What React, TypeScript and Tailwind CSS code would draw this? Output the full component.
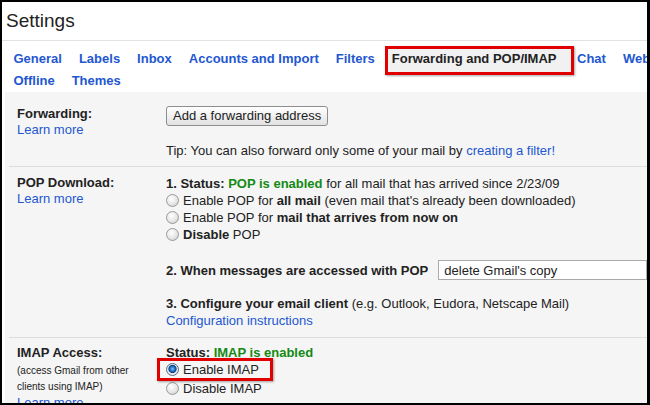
import React from "react";

const tabsTop = ["General", "Labels", "Inbox", "Accounts and Import", "Filters"];

function Radio({ checked = false }: { checked?: boolean }) {
  return (
    <span
      className={`mr-[4px] inline-block h-[13px] w-[13px] shrink-0 rounded-full border ${
        checked
          ? "border-[#5a6b80] bg-[radial-gradient(circle_at_50%_45%,#7fc4ff_0%,#1f6fc0_30%,#0b3f7a_45%,#dfe6ee_55%,#f4f6f8_100%)]"
          : "border-[#9a9a9a] bg-[radial-gradient(circle_at_40%_35%,#ffffff_0%,#e6e6e6_55%,#c4c4c4_100%)]"
      }`}
    />
  );
}

function Label({ title, children }: { title: string; children?: React.ReactNode }) {
  return (
    <div className="w-[161px] shrink-0 pl-3">
      <div className="font-bold leading-[16px]">{title}</div>
      {children}
    </div>
  );
}

export default function App() {
  return (
    <div className="h-[405px] w-[650px] overflow-hidden border-2 border-r-[3px] border-black bg-white font-['Liberation_Sans',Arial,sans-serif] text-[13px] text-[#222]">
      <div className="flex h-[39px] items-center border-b border-[#e2e2e2] pl-1 text-[19px] text-[#222]">
        Settings
      </div>

      <div className="pt-[7px] pl-[3px] font-bold leading-[22px] text-[#2357d0]">
        <div className="flex whitespace-nowrap">
          {tabsTop.map((t) => (
            <span key={t} className="px-[8.5px]">
              {t}
            </span>
          ))}
          <span className="relative pr-[12px] pl-[8.5px] text-[#222]">
            <span className="absolute top-[-2px] right-[-5px] bottom-[-5px] left-[2px] border-[3px] border-[#e00000] bg-[#f1f1f1] shadow-[1px_1px_2px_rgba(0,0,0,0.35)]" />
            <span className="relative">Forwarding and POP/IMAP</span>
          </span>
          <span className="px-[8.5px]">Chat</span>
          <span className="px-[8.5px]">Web Clips</span>
        </div>
        <div className="flex whitespace-nowrap">
          <span className="px-[8.5px]">Offline</span>
          <span className="px-[8.5px]">Themes</span>
        </div>
      </div>

      <div className="ml-[3px] h-full bg-[#f5f5f5]">
        <div className="flex pt-[14px] pb-[7px]">
          <Label title="Forwarding:">
            <div className="leading-[16px] text-[#2357d0]">Learn more</div>
          </Label>
          <div className="flex-1">
            <button className="h-[20px] rounded-[3px] border border-[#8e8e8e] bg-gradient-to-b from-white to-[#e2e2e2] px-[6px] leading-[18px] text-[#222]">
              Add a forwarding address
            </button>
            <div className="mt-[17px] leading-[16px] whitespace-nowrap">
              Tip: You can also forward only some of your mail by{" "}
              <span className="text-[#2357d0]">creating a filter!</span>
            </div>
          </div>
        </div>

        <div className="ml-1 border-t border-[#dcdcdc]" />

        <div className="flex pt-[8px] pb-[8px]">
          <Label title="POP Download:">
            <div className="leading-[16px] text-[#2357d0]">Learn more</div>
          </Label>
          <div className="flex-1 leading-[17px] whitespace-nowrap">
            <div>
              <b>1. Status: </b>
              <b className="text-[#138a13]">POP is enabled</b> for all mail that has arrived since 2/23/09
            </div>
            <div className="flex items-center">
              <Radio />
              <span>
                Enable POP for <b>all mail</b> (even mail that's already been downloaded)
              </span>
            </div>
            <div className="flex items-center">
              <Radio />
              <span>
                Enable POP for <b>mail that arrives from now on</b>
              </span>
            </div>
            <div className="flex items-center">
              <Radio />
              <span>
                <b>Disable</b> POP
              </span>
            </div>
            <div className="mt-[17px] flex items-center">
              <b>2. When messages are accessed with POP</b>
              <div className="ml-[10px] flex h-[20px] flex-1 items-center border border-[#aaa] bg-white pl-[5px]">
                delete Gmail's copy
              </div>
            </div>
            <div className="mt-[15px]">
              <b>3. Configure your email client</b> (e.g. Outlook, Eudora, Netscape Mail)
            </div>
            <div className="text-[#2357d0]">Configuration instructions</div>
          </div>
        </div>

        <div className="ml-1 border-t border-[#dcdcdc]" />

        <div className="flex pt-[7px]">
          <Label title="IMAP Access:">
            <div className="mt-[2px] text-[10px] leading-[16px]">
              (access Gmail from other
              <br />
              clients using IMAP)
            </div>
            <div className="leading-[16px] text-[#2357d0]">Learn more</div>
          </Label>
          <div className="-mt-[1px] flex-1 leading-[17px] whitespace-nowrap">
            <div>
              <b>Status: </b>
              <b className="text-[#138a13]">IMAP is enabled</b>
            </div>
            <div className="relative inline-flex items-center">
              <span className="absolute top-[-3px] right-[-14px] bottom-[-3px] left-[-9px] border-[3px] border-[#e00000] shadow-[1px_1px_2px_rgba(0,0,0,0.35)]" />
              <Radio checked />
              <span>Enable IMAP</span>
            </div>
            <div className="flex items-center">
              <Radio />
              <span>Disable IMAP</span>
            </div>
          </div>
        </div>
      </div>
    </div>
  );
}
